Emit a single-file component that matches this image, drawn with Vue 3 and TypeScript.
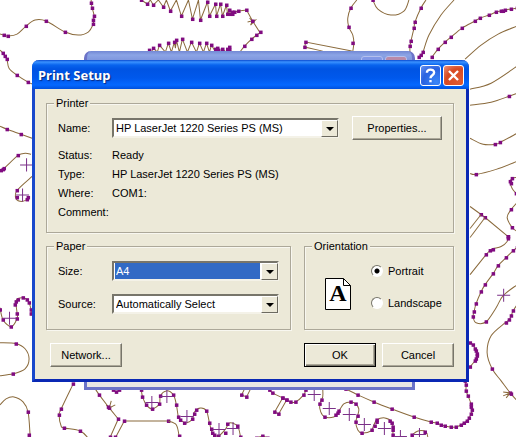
<script setup lang="ts">
import { ref } from 'vue'

type Point = [number, number]
interface Trace {
  points: string
  dots?: string
  straight?: boolean
}

const printer = ref('HP LaserJet 1220 Series PS (MS)')
const size = ref('A4')
const source = ref('Automatically Select')
const orientation = ref('portrait')

const parse = (list: string): Point[] =>
  list.split(' ').map((pair) => pair.split(',').map(Number) as Point)

// Smooth a list of survey points into a cubic curve through each of them.
function curve(points: Point[]): string {
  let d = `M${points[0].join(',')}`
  for (let i = 0; i < points.length - 1; i++) {
    const a = points[Math.max(i - 1, 0)]
    const b = points[i]
    const c = points[i + 1]
    const e = points[Math.min(i + 2, points.length - 1)]
    d += `C${b[0] + (c[0] - a[0]) / 6},${b[1] + (c[1] - a[1]) / 6}`
    d += ` ${c[0] - (e[0] - b[0]) / 6},${c[1] - (e[1] - b[1]) / 6} ${c[0]},${c[1]}`
  }
  return d
}

// A trace without its own dot list has a dot on every point.
const traces: Trace[] = [
  { points: '0,34 4,35 8,36 17,34 26,26 35,20 46,21 65,32 78,35 88,32 93,24 93,20 94,16 92,8 91,3 91,0', dots: '4,35 8,36 26,26 46,21 65,32 93,24 93,20 94,16 92,8 91,3' },
  { points: '0,50 3,53 5,56 7,59 9,68 17,75 28,82 33,84', dots: '3,53 5,56 7,59 17,75 28,82' },
  { points: '141,0 147,4 150,0 153,5 158,0 163,7 166,0 170,11 176,0 181,16 188,0 192,19 198,0 200,20 207,2 209,16 215,4 216,16 220,4 222,16 226,5 227,14 229,10 230,14 232,13 234,12 238,11 246,10 252,21 259,32', dots: '141,0 147,4 153,5 163,7 170,11 181,16 192,19 200,20 207,2 209,16 215,4 216,16 220,4 222,16 226,5 227,14 229,10 230,14 232,14 232,12 234,12 238,11 246,10', straight: true },
  { points: '260,32 256,35 251,39 244,46 240,51', dots: '260,32 256,35 251,39 244,46' },
  { points: '247,22 255,20 250,25 252,21 249,18', straight: true, dots: '252,21' },
  { points: '149,50 151,52 153,48 157,52 159,45 165,52 168,43 171,52 174,42 175,48 176,40 179,52 182,39 187,52 191,42 196,52 199,43 203,52 206,43 209,52 211,45 215,52 217,48 220,52 222,49 226,52 229,48 231,52', straight: true, dots: '149,50 153,48 159,45 168,43 174,42 176,40 182,39 191,42 199,43 206,43 211,45 215,49 217,48 218,50 222,49 227,49 229,47 229,50' },
  { points: '322,51 304,47 305,42 351,51', straight: true, dots: '304,47 305,42' },
  { points: '356,0 350,8 347,18 348,27 352,35 353,43 352,51', dots: '350,8 348,27 352,43' },
  { points: '372,0 377,9 390,15 403,11 408,0', dots: '372,0' },
  { points: '425,0 420,8 414,22 413,28 410,41 409,46 409,52', dots: '420,8 414,22 413,28 410,41 409,46' },
  { points: '453,0 440,15 428,35 422,52 420,55 418,57', dots: '422,52 420,55 418,57' },
  { points: '431,57 437,49 444,42 450,37 461,28 474,21 479,18 488,15 495,12 500,11 502,11 504,10 510,9 516,8' },
  { points: '464,59 480,45 497,34 516,26', dots: '' },
  { points: '469,89 490,83 516,66', dots: '' },
  { points: '469,105 490,102 508,96 516,93', dots: '508,96' },
  { points: '469,138 482,144 494,144 499,142 516,133', dots: '494,144 499,142' },
  { points: '469,173 475,174 495,169 516,161', dots: '475,174' },
  { points: '517,177 511,178 509,182 511,188 515,193', dots: '511,178 509,181 510,183 515,193' },
  { points: '516,202 510,209 506,217 511,227 516,231', dots: '510,209 511,227' },
  { points: '469,206 480,214 484,217 507,236', straight: true, dots: '480,214 484,217 507,236' },
  { points: '469,228 480,214', straight: true, dots: '' },
  { points: '469,237 484,217', straight: true, dots: '' },
  { points: '507,236 506,241 500,246 492,248 489,250 485,254 469,274', dots: '507,236 507,238 492,249 489,250 485,254' },
  { points: '516,247 512,250 505,257 497,265 492,273 484,284 480,291 475,303 473,311 472,316 475,322 485,321 495,307 502,295 516,284', dots: '516,247 512,250 505,257 497,265 492,273 484,284 480,291 475,303 473,311 472,316 485,321' },
  { points: '516,304 512,310 510,315 508,319 504,322 490,335 486,352 491,368 500,380 509,392 516,400', dots: '512,310 510,315 508,319 505,322 491,368 509,392' },
  { points: '502,395 509,392 502,391 509,392 505,397', straight: true, dots: '510,393' },
  { points: '469,342 472,344 474,348 475,350 476,353 476,355 475,358 474,360 469,366' },
  { points: '464,380 465,384 465,390 467,395 470,403 470,406 471,409 470,413 468,417 466,420 463,422 460,424 455,426 450,426 444,425 440,424 436,422 430,421 413,416 391,408 373,401 357,394 345,388' },
  { points: '269,389 272,392 282,397 286,399 290,401 295,401 303,394 305,389' },
  { points: '282,397 274,411 278,413 286,399', straight: true },
  { points: '322,388 322,396 319,403 320,411 324,416 333,416 337,412 343,403 350,401 355,403 358,408 357,414 355,421 357,429 361,432 370,430 373,424 376,419 384,417 391,421 392,427 392,437', dots: '321,399 319,403 324,416 335,414 337,412 338,410 350,401 355,403 357,415 355,421 361,432 371,429 374,425 376,421 376,419 389,420 391,422 392,426 392,429 392,434' },
  { points: '411,434 417,430 425,431 427,437', dots: '411,434 424,431' },
  { points: '256,437 262,435 267,437' },
  { points: '95,388 99,394 109,407 118,418 110,436', straight: true, dots: '99,394 109,407 118,418 110,436' },
  { points: '106,404 109,407 111,400 109,407 115,404', straight: true, dots: '108,406' },
  { points: '168,420 124,420 115,437', straight: true, dots: '168,420 124,420 115,436' },
  { points: '168,420 176,424 179,437', dots: '179,435' },
  { points: '113,389 116,391 119,389' },
  { points: '141,388 142,395 146,404 152,408 159,403 160,395 166,390 173,394 176,404 178,416 181,420 186,422 192,418 194,411 200,407 206,410 209,422 212,432 218,435 225,428 229,422 237,425 240,436', dots: '141,389 142,396 146,404 152,408 159,403 160,395 173,394 176,404 178,416 180,419 184,422 192,418 194,413 196,409 206,410 209,422 211,428 212,432 214,434 218,435 225,432 227,423 237,425 240,436' },
  { points: '244,388 241,394 246,396 250,388', straight: true, dots: '241,394 246,396' },
  { points: '0,307 3,319 11,326 17,318 17,312 16,300 22,297 28,300 31,309 31,315', dots: '0,309 3,319 11,326 17,318 17,313 15,304 16,301 18,299 23,297 27,299 29,302 31,309 31,313' },
  { points: '0,342 16,343 25,348 29,358 25,368 13,373 0,375', dots: '16,343 13,373' },
  { points: '0,404 6,398 14,396 23,401 28,411 30,434 30,437', dots: '28,411 29,434' },
  { points: '73,383 61,408 59,414 61,425 64,427 80,430 88,437', dots: '73,383 61,408 59,414 64,427 80,430' },
  { points: '0,126 7,129 21,134 32,138', dots: '7,129 21,134' },
  { points: '0,170 4,168 18,155 25,153 31,154', dots: '1,170 3,169 4,168 18,155' },
  { points: '32,176 17,190 16,198 22,201 29,198', dots: '17,190 17,197 27,199 28,197' },
]

const crosses = parse(
  '26,164 22,194 9,317 502,294 151,401 166,395 186,415 218,428 232,427 313,393 328,407 348,413 363,423 383,427 399,435 418,433',
)

const drawn = traces.map((t) => {
  const points = parse(t.points)
  return {
    d: t.straight ? 'M' + points.map((p) => p.join(',')).join('L') : curve(points),
    dots: t.dots === '' ? [] : t.dots ? parse(t.dots) : points,
  }
})
</script>

<template>
  <main class="desktop">
    <svg class="map" viewBox="0 0 516 437" preserveAspectRatio="xMinYMin slice" aria-hidden="true">
      <g v-for="(trace, i) in drawn" :key="i">
        <path class="line" :d="trace.d" />
        <rect v-for="(p, j) in trace.dots" :key="j" class="dot" :x="p[0] - 1.5" :y="p[1] - 1.5" width="3.500" height="3.500" />
      </g>
      <path v-for="(c, i) in crosses" :key="i" class="cross" :d="`M${c[0] - 6},${c[1] + 0.5}h13M${c[0] + 0.5},${c[1] - 6}v13`" />
    </svg>

    <div class="behind"><i></i><i class="red"></i></div>

    <form class="dialog" @submit.prevent>
      <header class="title">
        <h1>Print Setup</h1>
        <button type="button" class="cap" aria-label="Help">
          <svg viewBox="0 0 21 21"><path d="M6.500 7.500C6.500 2.800 14.500 2.800 14.500 7.200C14.500 10.400 10.500 10 10.500 13.500" /><path d="M10.500 15.500v2.500" /></svg>
        </button>
        <button type="button" class="cap red" aria-label="Close">
          <svg viewBox="0 0 21 21"><path d="M5.500 5.500l10 10M15.500 5.500l-10 10" /></svg>
        </button>
      </header>

      <div class="body">
        <fieldset>
          <legend>Printer</legend>
          <div class="row">
            <label for="name">Name:</label>
            <span class="combo">
              <select id="name" v-model="printer"><option>HP LaserJet 1220 Series PS (MS)</option></select>
              <span class="arrow"></span>
            </span>
            <button type="button" class="btn wide">Properties...</button>
          </div>
          <dl>
            <dt>Status:</dt><dd>Ready</dd>
            <dt>Type:</dt><dd>HP LaserJet 1220 Series PS (MS)</dd>
            <dt>Where:</dt><dd>COM1:</dd>
            <dt>Comment:</dt><dd></dd>
          </dl>
        </fieldset>

        <div class="pair">
          <fieldset class="paper">
            <legend>Paper</legend>
            <div class="row">
              <label for="size">Size:</label>
              <span class="combo">
                <select id="size" v-model="size" class="active"><option>A4</option></select>
                <span class="arrow"></span>
              </span>
            </div>
            <div class="row">
              <label for="source">Source:</label>
              <span class="combo">
                <select id="source" v-model="source"><option>Automatically Select</option></select>
                <span class="arrow"></span>
              </span>
            </div>
          </fieldset>

          <fieldset class="orient">
            <legend>Orientation</legend>
            <svg class="page" viewBox="0 0 26 32" aria-hidden="true">
              <path d="M.5.5H18.500L25.500 7.500V31.500H.5Z" fill="#fff" stroke="#000" />
              <path d="M18.500.5V7.500H25.500" fill="none" stroke="#000" />
              <text x="13" y="23" text-anchor="middle">A</text>
            </svg>
            <div class="choices">
              <label><input v-model="orientation" type="radio" name="orientation" value="portrait" />Portrait</label>
              <label><input v-model="orientation" type="radio" name="orientation" value="landscape" />Landscape</label>
            </div>
          </fieldset>
        </div>

        <footer>
          <button type="button" class="btn network">Network...</button>
          <button type="submit" class="btn default">OK</button>
          <button type="button" class="btn">Cancel</button>
        </footer>
      </div>
    </form>
  </main>
</template>

<style>
body {
  background: #fff;
}
</style>

<style scoped>
.desktop {
  position: relative;
  box-sizing: border-box;
  min-height: 100vh;
  padding: 60px 47px 56px 32px;
  overflow: hidden;
  font: 11px/14px "Liberation Sans", Arial, sans-serif;
  color: #000;
}
.map {
  position: absolute;
  inset: 0;
  width: 100%;
  height: 100%;
}
.line {
  fill: none;
  stroke: #8a6a3c;
}
.dot {
  fill: #800c80;
}
.cross {
  stroke: #7b3088;
}
.behind {
  position: absolute;
  inset: 51px 101px 48px 84px;
  box-sizing: border-box;
  display: flex;
  justify-content: flex-end;
  gap: 2px;
  padding: 5px 5px;
  border: solid #6b73c8;
  border-width: 0 3px 3px;
  border-radius: 7px 7px 0 0;
  background: linear-gradient(#7288d4, #8ba4e6 4px, #7c94dd 10px, #e8e6e4 11px);
}
.behind i {
  width: 20px;
  height: 12px;
  border: 1px solid #b4c0ee;
  border-radius: 3px;
  background: #8298e6;
}
.behind i.red {
  background: #b98aa8;
}
.dialog {
  position: relative;
  border-radius: 7px 7px 0 0;
  background: #ece9d8;
  border: solid #0a28b4;
  border-width: 0 3px 3px;
  border-left-color: #1848cc;
}
.title {
  display: flex;
  align-items: center;
  gap: 2px;
  height: 29px;
  margin: 0 -3px;
  padding: 1px 5px 0 6px;
  box-sizing: border-box;
  border-radius: 7px 7px 0 0;
  background: linear-gradient(#0a4ad0, #3a92ff 2px, #0864ee 5px, #0054e3 9px, #0058ec 18px, #0468ff 25px, #0050dc 29px);
}
h1 {
  flex: 1;
  margin: 0;
  font: bold 13px/20px "Noto Sans", sans-serif;
  color: #fff;
  text-shadow: 1px 1px 1px #0a2a80;
}
.cap {
  width: 21px;
  height: 21px;
  padding: 0;
  border: 1px solid #fff;
  border-radius: 3px;
  background: radial-gradient(circle at 80% 85%, #3a86f8, #2a62e0 60%, #6a94f0);
}
.cap.red {
  background: radial-gradient(circle at 80% 85%, #e05a30, #d84a22 60%, #ee947c);
}
.cap svg {
  display: block;
  width: 19px;
  height: 19px;
  fill: none;
  stroke: #fff;
  stroke-width: 2.6;
}
.body {
  padding: 7px 12px 12px 11px;
}
fieldset {
  min-width: 0;
  margin: 0;
  padding: 6px 11px 10px;
  border: 1px solid #aca899;
  box-shadow: 1px 1px 0 #f8f7f0, inset 1px 1px 0 #f8f7f0;
}
legend {
  margin-left: -4px;
  padding: 0 2px;
  background: #ece9d8;
}
.row {
  display: flex;
  align-items: center;
}
.row > label,
dt {
  flex: none;
  width: 54px;
}
.combo {
  position: relative;
  flex: 1;
  min-width: 0;
}
select {
  appearance: none;
  display: block;
  width: 100%;
  height: 20px;
  padding: 0 20px 0 2px;
  border: 2px solid;
  border-color: #77756a #f4f2e8 #f4f2e8 #77756a;
  border-radius: 0;
  background: #fff;
  font: inherit;
  color: #000;
  outline: none;
}
select.active {
  color: #fff;
  background: linear-gradient(#316ac5, #316ac5) 1px 0 / calc(100% - 18px) 100% no-repeat #fff;
}
.arrow {
  position: absolute;
  top: 2px;
  right: 1px;
  box-sizing: border-box;
  width: 17px;
  height: 17px;
  border: 1px solid;
  border-color: #fff #6c6a60 #6c6a60 #fff;
  background: #ece9d8;
  pointer-events: none;
}
.arrow::after {
  content: "";
  position: absolute;
  top: 6px;
  left: 4px;
  border: 4px solid transparent;
  border-top-color: #000;
  border-bottom: 0;
}
.btn {
  width: 72px;
  height: 24px;
  padding: 0;
  border: 1px solid;
  border-color: #fff #77756a #77756a #fff;
  box-shadow: inset -1px -1px 0 #aca899;
  background: #ece9d8;
  font: inherit;
  color: inherit;
}
.btn.wide {
  width: 90px;
  margin-left: 13px;
}
.btn.default {
  border-color: #000;
  box-shadow: inset 1px 1px 0 #fff, inset -1px -1px 0 #77756a, inset -2px -2px 0 #aca899;
}
dl {
  display: grid;
  grid-template-columns: 54px 1fr;
  margin: 6px 0 0;
  line-height: 19px;
}
dd {
  margin: 0;
}
dt {
  white-space: nowrap;
}
.pair {
  display: grid;
  grid-template-columns: 245fr 150fr;
  gap: 13px;
  margin-top: 6px;
}
.paper {
  display: grid;
  gap: 13px;
  padding: 8px 11px 15px;
}
.orient {
  display: flex;
  align-items: center;
  gap: 20px;
  padding: 0 10px 0 20px;
}
.orient legend {
  margin-left: -13px;
}
.page {
  flex: none;
  width: 26px;
  height: 32px;
  margin-top: 6px;
}
.page text {
  font: bold 24px "Liberation Serif", serif;
}
.choices {
  display: grid;
  gap: 18px;
  margin-bottom: 8px;
}
.choices label {
  display: flex;
  align-items: center;
  gap: 5px;
}
input {
  appearance: none;
  box-sizing: border-box;
  width: 12px;
  height: 12px;
  margin: 0;
  border: 1px solid;
  border-color: #77756a #fff #fff #77756a;
  border-radius: 50%;
  background: #fff;
}
input:checked {
  background: radial-gradient(circle, #000 2px, #fff 3px);
}
footer {
  display: flex;
  gap: 6px;
  margin-top: 13px;
}
.network {
  margin: 0 auto 0 4px;
}
</style>
